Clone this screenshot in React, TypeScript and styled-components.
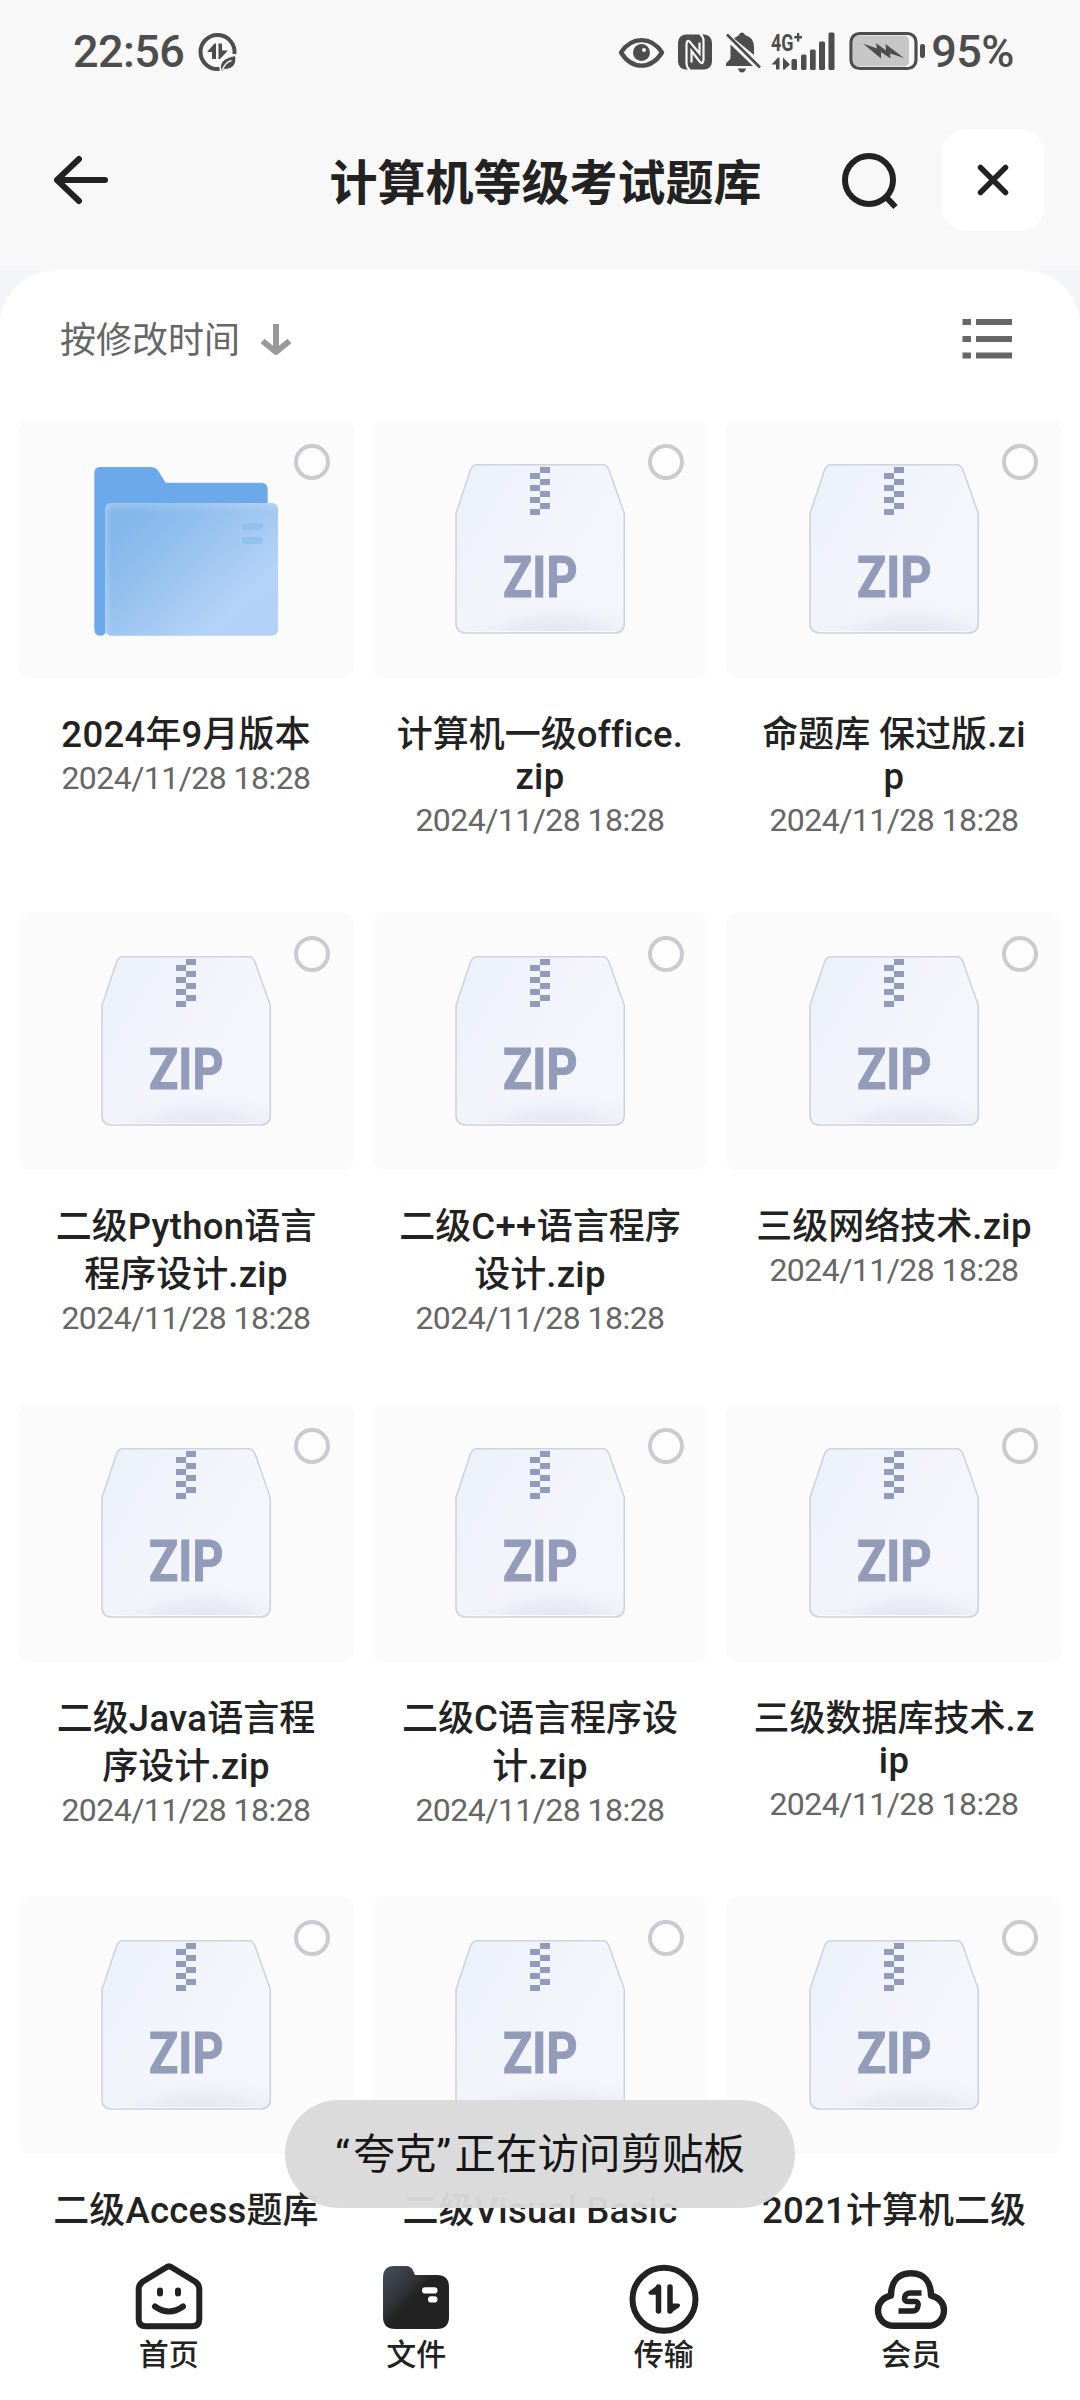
import React, { useId } from 'react';
import styled, { createGlobalStyle } from 'styled-components';

const Global = createGlobalStyle`
  *, *::before, *::after { box-sizing: border-box; }
  body { margin: 0; background: #fff; -webkit-font-smoothing: antialiased; }
  svg { flex: none; overflow: visible; }
`;

const cjk = `'Noto Sans CJK SC', sans-serif`;

const Screen = styled.div`
  position: relative;
  display: flex;
  flex-direction: column;
  width: 1080px;
  height: 2400px;
  overflow: hidden;
  background: #f4f5f8;
  color: #222;
  font-family: Roboto, ${cjk};
`;

const StatusBar = styled.div`
  display: flex;
  align-items: center;
  flex: none;
  height: 102px;
  padding: 1px 66px 0 73px;
  background: #f8f8f8;
  color: #4d4d4d;
`;

const StatusText = styled.span<{ $spacing: number }>`
  font-size: 45px;
  font-weight: 500;
  line-height: 60px;
  letter-spacing: ${(p) => p.$spacing}px;
  white-space: nowrap;
`;

const StatusIcons = styled.div`
  display: flex;
  align-items: center;
  gap: 5px;
  margin-left: auto;
`;

const Header = styled.header`
  display: flex;
  align-items: center;
  flex: none;
  height: 168px;
  padding: 0 36px 12px 45px;
  background: #f8f8f8;
`;

const IconButton = styled.button<{ $size: number; $filled?: boolean }>`
  display: flex;
  align-items: center;
  justify-content: center;
  flex: none;
  width: ${(p) => p.$size}px;
  height: ${(p) => p.$size}px;
  padding: 0;
  border: 0;
  border-radius: 24px;
  background: ${(p) => (p.$filled ? '#fff' : 'transparent')};
  color: #222;
`;

const Title = styled.h1`
  flex: 1;
  margin: 0 0 0 143px;
  padding-bottom: 2px;
  font: 700 48px/66px ${cjk};
  text-align: center;
  white-space: nowrap;
`;

const Actions = styled.div`
  display: flex;
  align-items: center;
  gap: 39px;
`;

const Sheet = styled.main`
  display: flex;
  flex-direction: column;
  flex: 1;
  min-height: 0;
  overflow: hidden;
  border-radius: 56px 56px 0 0;
  background: #fff;
`;

const SortBar = styled.div`
  display: flex;
  align-items: center;
  justify-content: space-between;
  flex: none;
  height: 150px;
  padding: 0 68px 12px 60px;
`;

const SortLabel = styled.div`
  display: flex;
  align-items: center;
  gap: 20px;
  padding-bottom: 5px;
  color: #666;
  font: 400 36px/52px ${cjk};
`;

const Grid = styled.div`
  display: grid;
  grid-template-columns: repeat(3, 336px);
  grid-auto-rows: 492px;
  column-gap: 18px;
  padding: 0 18px;
`;

const Item = styled.div`
  display: flex;
  flex-direction: column;
  align-items: center;
`;

const Thumb = styled.div`
  position: relative;
  flex: none;
  width: 336px;
  height: 258px;
  margin-bottom: 29.5px;
  border-radius: 12px;
  background: #fbfbfc;
`;

const Check = styled.span`
  position: absolute;
  top: 24px;
  right: 24px;
  width: 36px;
  height: 36px;
  border: 4px solid #cacad0;
  border-radius: 50%;
  background: #fdfdfd;
`;

const NameLine = styled.div<{ $latin: boolean }>`
  padding-top: ${(p) => (p.$latin ? 0 : 6)}px;
  font-size: 36px;
  font-weight: 500;
  line-height: 42px;
  height: ${(p) => (p.$latin ? 42 : 48)}px;
  white-space: nowrap;
`;

const Latin = styled.span`
  font-size: 36.5px;
  line-height: 1;
  letter-spacing: 0.3px;
`;

const DateLine = styled.div`
  height: 42px;
  margin-top: 1.5px;
  color: #666;
  font-size: 32px;
  line-height: 42px;
  letter-spacing: -0.55px;
  white-space: nowrap;
`;

const TabBar = styled.nav`
  display: grid;
  grid-template-columns: repeat(4, 1fr);
  flex: none;
  height: 164px;
  padding: 20px 45px 0;
  background: #fff;
`;

const Tab = styled.div`
  display: flex;
  flex-direction: column;
  align-items: center;
  font: 500 30px/40px ${cjk};
`;

const Toast = styled.div`
  position: absolute;
  left: 285px;
  top: 2100px;
  display: flex;
  align-items: center;
  justify-content: center;
  width: 510px;
  height: 108px;
  padding-top: 2px;
  border-radius: 54px;
  background: rgba(218, 218, 218, 0.96);
  color: #161616;
  font-size: 41.5px;
  line-height: 60px;
  white-space: nowrap;
`;

const Quote = styled.span`
  letter-spacing: 3.5px;
`;

const DataSaverIcon = () => (
  <svg width="40" height="40" viewBox="0 0 40 40" style={{ marginLeft: 14 }}>
    <path d="M36.4 22A17 17 0 1 0 21.5 36.9" fill="none" stroke="currentColor" strokeWidth="4" />
    <path d="M9.500 19.5 16.500 11.5H18V27H14V20H9.500zM20.5 11.5H24V18.5H30L22 27H20.500z" fill="currentColor" />
    <path d="M37.5 23.5C39 31 36 37.5 26 37.5L25 39.5L23 38C21 31 25 26 37.5 23.5Z" fill="currentColor" stroke="#f8f8f8" strokeWidth="1" />
    <path d="M24.5 38C26 33 29 30 33.5 28.5" fill="none" stroke="#f8f8f8" strokeWidth="1.4" />
  </svg>
);

const SystemIcons = () => (
  <svg width="310" height="48" viewBox="616 27.500 310 48" fill="currentColor">
    <path d="M621 52C632 35.5 651 35.5 662 52C651 69.500 632 69.500 621 52Z" fill="none" stroke="currentColor" strokeWidth="4.400" strokeLinejoin="round" />
    <circle cx="641.500" cy="52" r="8.500" />
    <circle cx="644" cy="49.500" r="2" fill="#f8f8f8" />

    <rect x="678" y="34" width="34" height="35" rx="8" />
    <path d="M690 69.500Q686.500 67 686.500 62.500V43.500Q687 38.500 690 41.500L699.500 53V42M700 33.500Q703.500 36 703.500 40.500V59.500Q703 64.500 700 61.500L691.500 50.500V62" fill="none" stroke="#f8f8f8" strokeWidth="2.200" />

    <path d="M734 38L739 34.500Q739.500 32 742 32Q744.500 32 745 34.500Q754 37 754 46V54.500ZM730.500 44L753 65.500H726V63L730.500 58Z" />
    <path d="M727 34 760 67" stroke="currentColor" strokeWidth="2.600" />
    <path d="M738 68H746Q745 72 742 72Q739 72 738 68Z" />

    <text x="771" y="50" fontFamily="Roboto" fontWeight="700" fontSize="24.500" textLength="22.500" lengthAdjust="spacingAndGlyphs">4G</text>
    <path d="M794.300 35.500H797V32.500H799.300V35.500H802V38H799.300V41H797V38H794.300Z" />
    <path d="M771.500 64 778 57H779.500V69H776V64ZM783 57 790 64 784.500 69H783Z" />
    <rect x="791.500" y="58.500" width="5.500" height="11" rx="1.500" />
    <rect x="801" y="54" width="5.500" height="15.500" rx="1.500" />
    <rect x="810" y="49" width="5.700" height="20.500" rx="1.500" />
    <rect x="819" y="41" width="6" height="28.500" rx="1.500" />
    <rect x="828.500" y="32" width="6" height="37.500" rx="1.500" />

    <rect x="853" y="35" width="56" height="31" rx="5" fill="#c6c6c6" />
    <rect x="851" y="33" width="65" height="35" rx="8.500" fill="none" stroke="currentColor" strokeWidth="3.200" />
    <path d="M863 43 877 48 876 42.500 886 50 885.500 43.500 904 57.500 890 53 890.500 58 881 51.500 881 58Z" />
    <rect x="920" y="43.500" width="5" height="14" rx="2.200" />
  </svg>
);

const BackIcon = () => (
  <svg width="60" height="60" viewBox="0 0 60 60" fill="none" stroke="currentColor" strokeWidth="6" strokeLinecap="round" strokeLinejoin="round">
    <path d="M31 9 9 30 31 51M9 30H57" />
  </svg>
);

const SearchIcon = () => (
  <svg width="60" height="60" viewBox="0 0 60 60" fill="none" stroke="currentColor" strokeWidth="6">
    <circle cx="29" cy="30" r="24" />
    <path d="M46 47 55.500 57" />
  </svg>
);

const CloseIcon = () => (
  <svg width="34" height="34" viewBox="0 0 34 34" fill="none" stroke="currentColor" strokeWidth="5.500" strokeLinecap="round">
    <path d="M4.500 4.500 29.500 29.500M29.500 4.500 4.500 29.500" />
  </svg>
);

const SortArrow = () => (
  <svg width="32" height="34" viewBox="0 0 32 34" fill="none" stroke="#999" strokeWidth="6" strokeLinejoin="round" style={{ marginTop: 7 }}>
    <path d="M16 1V28M2.500 18 16 29 29.500 18" />
  </svg>
);

const ListIcon = () => (
  <svg width="50" height="42" viewBox="0 0 50 42" fill="#666">
    {[1, 18, 34.5].map((y) => (
      <React.Fragment key={y}>
        <rect x="0.500" y={y} width="8.500" height="6" />
        <rect x="14" y={y} width="36" height="6" />
      </React.Fragment>
    ))}
  </svg>
);

const FolderArt = () => {
  const id = useId();
  return (
    <svg width="336" height="258" viewBox="0 0 336 258">
      <defs>
        <linearGradient id={id} gradientUnits="userSpaceOnUse" x1="115" y1="100" x2="222" y2="215">
          <stop offset="0" stopColor="#84b8eb" />
          <stop offset="0.250" stopColor="#8fbfed" />
          <stop offset="0.550" stopColor="#a3c8f2" />
          <stop offset="0.850" stopColor="#b5d3f8" />
          <stop offset="1" stopColor="#b4d2f7" />
        </linearGradient>
        <linearGradient id={`${id}e`} x1="0" y1="0" x2="1" y2="0">
          <stop offset="0" stopColor="#fff" stopOpacity="0.220" />
          <stop offset="1" stopColor="#fff" stopOpacity="0" />
        </linearGradient>
        <linearGradient id={`${id}t`} x1="0" y1="0" x2="0" y2="1">
          <stop offset="0" stopColor="#fff" stopOpacity="0.180" />
          <stop offset="1" stopColor="#fff" stopOpacity="0" />
        </linearGradient>
      </defs>
      <path d="M82 47H133Q137.500 47 140 50.500L147.700 62.700H243Q249.700 62.700 249.700 69.500V200H90Q90 215.700 82.500 215.700Q76.300 215.700 76.300 209V53Q76.300 47 82 47Z" fill="#6ca9ea" />
      <rect x="87" y="83" width="173" height="132.700" rx="6" fill={`url(#${id})`} />
      <path d="M94 83Q87 83 87 90V215.700H94Z" fill={`url(#${id}e)`} />
      <rect x="88" y="83" width="171" height="9" rx="5" fill={`url(#${id}t)`} />
      <rect x="224" y="103" width="20.700" height="7" rx="2" fill="#93c0ef" />
      <rect x="224" y="117" width="20.700" height="7" rx="2" fill="#93c0ef" />
    </svg>
  );
};

const ZipArt = () => {
  const id = useId();
  const teeth = [0, 1, 2, 3, 4, 5, 6, 7];
  const shape = 'M105 44.800H230.500Q235 44.800 237 50L252.300 93.300V203Q252.300 213 242.500 213H94Q84 213 84 203V93.300L98.500 50Q100.500 44.800 105 44.800Z';
  return (
    <svg width="336" height="258" viewBox="0 0 336 258">
      <defs>
        <linearGradient id={id} x1="0" y1="0" x2="1" y2="0.600">
          <stop offset="0" stopColor="#ebf0f9" />
          <stop offset="0.600" stopColor="#f3f5fb" />
          <stop offset="1" stopColor="#f5f6fb" />
        </linearGradient>
        <radialGradient id={`${id}s`} cx="0.600" cy="1.020" r="0.620" gradientTransform="translate(0 0.680) scale(1 0.340)">
          <stop offset="0" stopColor="#e4e4ef" />
          <stop offset="0.500" stopColor="#e9e9f4" stopOpacity="0.850" />
          <stop offset="1" stopColor="#f0f1fa" stopOpacity="0" />
        </radialGradient>
      </defs>
      <path d={shape} fill={`url(#${id})`} />
      <path d={shape} fill={`url(#${id}s)`} />
      <path d="M93 211.500H243" stroke="#fafafe" strokeWidth="1.200" />
      <path d={shape} fill="none" stroke="#cfd3e0" strokeWidth="1.600" />
      {teeth.map((n) => (
        <rect key={n} x={n % 2 ? 158 : 168} y={47 + n * 6} width="10" height="6" fill="#929cb8" />
      ))}
      <text x="131" y="176.700" fontFamily="Roboto" fontWeight="700" fontSize="57" fill="#929cb8" stroke="#929cb8" strokeWidth="1" textLength="74.500" lengthAdjust="spacingAndGlyphs">ZIP</text>
    </svg>
  );
};

const HomeIcon = () => (
  <svg width="72" height="76" viewBox="0 0 72 76" fill="none" stroke="currentColor" strokeWidth="6" strokeLinejoin="round" strokeLinecap="round">
    <path d="M33.500 11.300Q36 9.500 38.500 11.300L62 25.500Q66.300 28.500 66.300 33V63Q66.300 70.300 59 70.300H13Q5.700 70.300 5.700 63V33Q5.700 28.500 10 25.500Z" />
    <path d="M27 34.500V37.500M45 34.500V37.500M22 50.500Q36 60.500 50 50.500" />
  </svg>
);

const FilesIcon = () => {
  const id = useId();
  return (
    <svg width="72" height="76" viewBox="0 0 72 76">
      <defs>
        <linearGradient id={id} x1="0.100" y1="0.100" x2="0.600" y2="0.550">
          <stop offset="0" stopColor="#414850" />
          <stop offset="0.500" stopColor="#323539" />
          <stop offset="0.800" stopColor="#222" />
        </linearGradient>
      </defs>
      <path d="M14 10H26Q31 10 33 14.500L35 19H57Q69 19 69 31V61Q69 73 57 73H15Q3 73 3 61V22Q3 10 14 10Z" fill={`url(#${id})`} />
      <rect x="42" y="31.300" width="15.500" height="6.200" rx="3.100" fill="#fff" />
      <rect x="48" y="40.300" width="9.500" height="6.200" rx="3.100" fill="#fff" />
    </svg>
  );
};

const TransferIcon = () => (
  <svg width="72" height="76" viewBox="0 0 72 76" fill="none" stroke="currentColor" strokeLinecap="round" strokeLinejoin="round">
    <circle cx="36" cy="43.300" r="31.500" strokeWidth="6" />
    <path d="M30.500 31V55" strokeWidth="5.500" />
    <path d="M30.500 31 22.500 36.800H30.500ZM42 55 50 49.500H42Z" fill="currentColor" strokeWidth="4" />
    <path d="M42 31V55" strokeWidth="5.500" />
  </svg>
);

const MemberIcon = () => (
  <svg width="76" height="76" viewBox="0 0 76 76" fill="none" stroke="currentColor" strokeWidth="6.400" strokeLinejoin="round">
    <path d="M18 39.500C18 26 25 17.200 38 17.200S58 26 58 39.500C65 41 71 46.500 71 54C71 63.500 64 69.800 55 69.800H21C12 69.800 5 63.500 5 54C5 46.500 11 41 18 39.500Z" />
    <path d="M48.500 37H37Q32.500 37 31.500 41.500Q31 45.500 35 45.500H42Q46 45.500 45 50Q44 55 40 55H25.500" strokeWidth="5.400" />
  </svg>
);

type Entry = { lines: string[]; folder?: boolean; date?: string };

const date = '2024/11/28 18:28';

const entries: Entry[] = [
  { lines: ['2024年9月版本'], folder: true, date },
  { lines: ['计算机一级office.', 'zip'], date },
  { lines: ['命题库 保过版.zi', 'p'], date },
  { lines: ['二级Python语言', '程序设计.zip'], date },
  { lines: ['二级C++语言程序', '设计.zip'], date },
  { lines: ['三级网络技术.zip'], date },
  { lines: ['二级Java语言程', '序设计.zip'], date },
  { lines: ['二级C语言程序设', '计.zip'], date },
  { lines: ['三级数据库技术.z', 'ip'], date },
  { lines: ['二级Access题库'] },
  { lines: ['二级Visual Basic'] },
  { lines: ['2021计算机二级'] },
];

const tabs = [
  { label: '首页', Icon: HomeIcon },
  { label: '文件', Icon: FilesIcon },
  { label: '传输', Icon: TransferIcon },
  { label: '会员', Icon: MemberIcon },
];

const MixedText = ({ text }: { text: string }) => (
  <>
    {text.split(/([A-Za-z0-9.+]+)/).filter(Boolean).map((run, i) =>
      /[A-Za-z0-9.+]/.test(run) ? <Latin key={i}>{run}</Latin> : run,
    )}
  </>
);

export default function App() {
  return (
    <Screen>
      <Global />
      <StatusBar>
        <StatusText $spacing={-0.6}>22:56</StatusText>
        <DataSaverIcon />
        <StatusIcons>
          <SystemIcons />
          <StatusText $spacing={-0.5}>95%</StatusText>
        </StatusIcons>
      </StatusBar>
      <Header>
        <IconButton $size={66}><BackIcon /></IconButton>
        <Title>计算机等级考试题库</Title>
        <Actions>
          <IconButton $size={66}><SearchIcon /></IconButton>
          <IconButton $size={102} $filled><CloseIcon /></IconButton>
        </Actions>
      </Header>
      <Sheet>
        <SortBar>
          <SortLabel>按修改时间<SortArrow /></SortLabel>
          <ListIcon />
        </SortBar>
        <Grid>
          {entries.map(({ lines, folder, date: modified }) => (
            <Item key={lines[0]}>
              <Thumb>
                {folder ? <FolderArt /> : <ZipArt />}
                <Check />
              </Thumb>
              {lines.map((text) => (
                <NameLine key={text} $latin={/^[a-z]+$/.test(text)}><MixedText text={text} /></NameLine>
              ))}
              {modified && <DateLine>{modified}</DateLine>}
            </Item>
          ))}
        </Grid>
      </Sheet>
      <TabBar>
        {tabs.map(({ label, Icon }) => (
          <Tab key={label}><Icon />{label}</Tab>
        ))}
      </TabBar>
      <Toast><Quote>“</Quote>夸克<Quote>”</Quote>正在访问剪贴板</Toast>
    </Screen>
  );
}
